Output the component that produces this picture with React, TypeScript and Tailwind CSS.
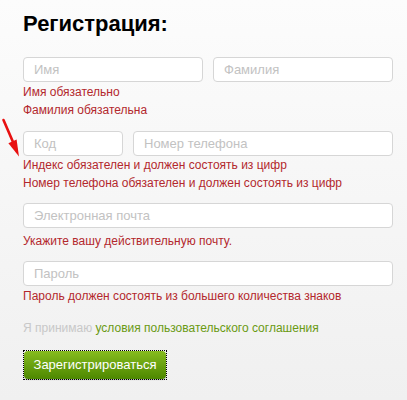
export default function App() {
  return (
    <div
      className="relative h-[400px] w-[407px] overflow-hidden bg-gradient-to-b from-[#fcfcfc] to-[#f0f0f0] pl-[23px] pr-[14px] pt-[10px]"
      style={{ fontFamily: '"Liberation Sans", Arial, sans-serif' }}
    >
      <h1 className="text-[22px] font-bold leading-[28px] text-black">Регистрация:</h1>

      <div className="mt-[19px] flex gap-[10px]">
        <Field placeholder="Имя" className="w-[180px]" />
        <Field placeholder="Фамилия" className="w-[180px]" />
      </div>
      <div className="mt-[1px]">
        <Err>Имя обязательно</Err>
        <Err>Фамилия обязательна</Err>
      </div>

      <div className="mt-[12px] flex gap-[10px]">
        <Field placeholder="Код" className="w-[100px]" />
        <Field placeholder="Номер телефона" className="w-[260px]" />
      </div>
      <div>
        <Err>Индекс обязателен и должен состоять из цифр</Err>
        <Err>Номер телефона обязателен и должен состоять из цифр</Err>
      </div>

      <div className="mt-[11px]">
        <Field placeholder="Электронная почта" className="w-full" />
      </div>
      <div className="mt-[4px]">
        <Err>Укажите вашу действительную почту.</Err>
      </div>

      <div className="mt-[11px]">
        <Field placeholder="Пароль" className="w-full" />
      </div>
      <div className="mt-[1px]">
        <Err>Пароль должен состоять из большего количества знаков</Err>
      </div>

      <p className="mt-[14px] text-[12px] leading-[18px] text-[#c8c8c8]">
        Я принимаю <a className="text-[#6a9a13]">условия пользовательского соглашения</a>
      </p>

      <div className="mt-[13px] inline-block border border-dotted border-black">
        <button className="h-[28px] w-[142px] rounded-[4px] bg-gradient-to-b from-[#86bc1e] to-[#4d8800] text-[13px] text-white shadow-[0_1px_1px_rgba(0,0,0,0.25)]">
          Зарегистрироваться
        </button>
      </div>

      <svg className="absolute left-0 top-[110px]" width="26" height="52" viewBox="0 0 26 52">
        <path d="M3.5 10 L13 32" stroke="#e81010" strokeWidth="2.6" fill="none" strokeLinecap="round" />
        <path d="M8.4 33.2 L19 46.5 L16.6 29.6 Z" fill="#e81010" />
      </svg>
    </div>
  )
}

function Field({ placeholder, className }: { placeholder: string; className: string }) {
  return (
    <div
      className={`flex h-[25px] items-center rounded-[4px] border border-[#d6d6d6] bg-white px-[10px] text-[13px] text-[#c2c2c2] ${className}`}
    >
      {placeholder}
    </div>
  )
}

function Err({ children }: { children: string }) {
  return <div className="text-[12px] leading-[18px] text-[#b3282d]">{children}</div>
}
